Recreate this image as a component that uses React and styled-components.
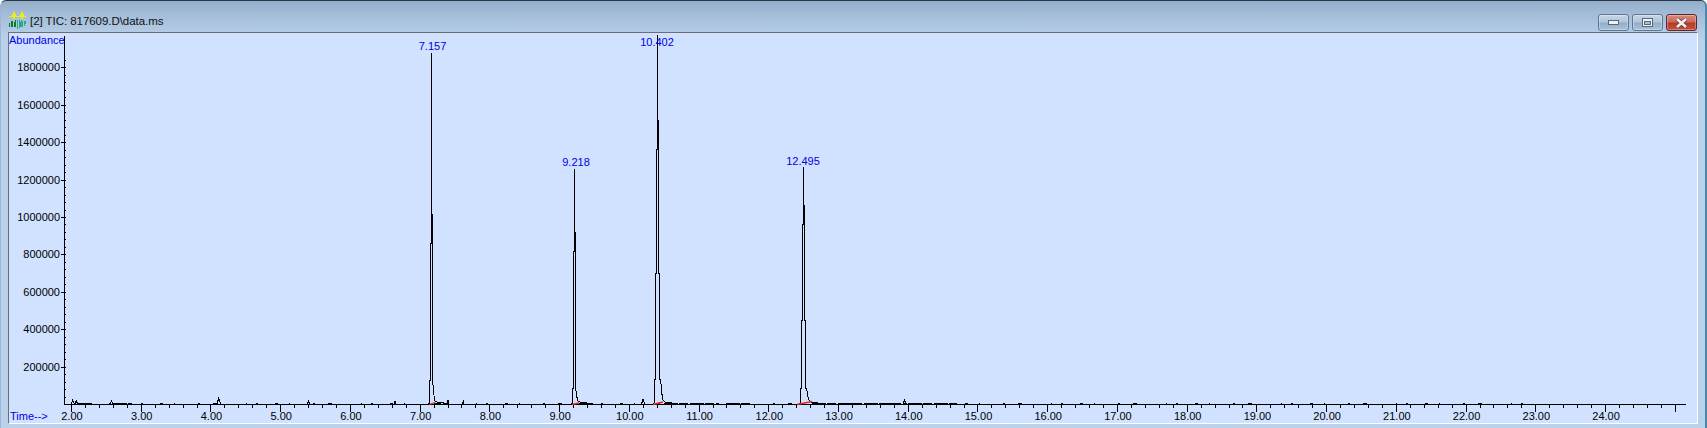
import React from 'react';
import styled, { createGlobalStyle } from 'styled-components';

const Global = createGlobalStyle`
  html, body { margin: 0; padding: 0; background: #ffffff; }
  #root { width: 1707px; height: 428px; overflow: hidden; }
`;

const Window = styled.div`
  width: 1707px;
  height: 428px;
  box-sizing: border-box;
  display: flex;
  flex-direction: column;
  background: linear-gradient(180deg, #93aecb 0, #a2bbd7 12px, #b2cae4 30px, #b9d1ea 40px);
  border-top: 1px solid #2b3640;
  border-left: 1px solid #9db7d3;
  border-right: 2px solid #4d87ab;
  border-radius: 6px 6px 0 0;
  padding: 0 6px 3px 7px;
  font-family: "Liberation Sans", Arial, sans-serif;
`;

const TitleBar = styled.div`
  height: 31px;
  box-sizing: border-box;
  padding-top: 8px;
  display: flex;
  align-items: center;
  flex: none;
`;

const IconSlot = styled.div`
  width: 17px;
  height: 17px;
  margin-left: 1px;
  flex: none;
`;

const TitleText = styled.span`
  font-size: 11.5px;
  color: #111;
  margin-left: 4px;
  flex: 1;
  letter-spacing: -0.05px;
`;

const Controls = styled.div`
  display: flex;
  gap: 3px;
  margin-right: 2px;
  margin-top: 4px;
`;

const CtlButton = styled.div`
  width: 31px;
  height: 17px;
  box-sizing: border-box;
  border: 1px solid ${p => (p.$close ? '#5b2430' : '#5f7690')};
  border-radius: 3px;
  display: flex;
  align-items: center;
  justify-content: center;
  background: ${p => p.$close
    ? 'linear-gradient(180deg, #d98a7c 0, #cb6a5c 45%, #b73a28 55%, #c4513c 100%)'
    : 'linear-gradient(180deg, #c6d7e8 0, #afc5dc 45%, #94aecb 55%, #aac2da 100%)'};
  box-shadow: inset 0 0 0 1px rgba(255,255,255,0.3);
`;

const Plot = styled.div`
  width: 1690px;
  height: 392px;
  flex: none;
  box-sizing: border-box;
  border-top: 1px solid #6e6e6e;
  border-left: 1px solid #6e6e6e;
  border-right: 1px solid #fff;
  border-bottom: 1px solid #fff;
  background: #d0e2ff;
`;

const Chart = styled.svg`
  display: block;
  width: 1688px;
  height: 390px;
  text { font-family: "Liberation Sans", Arial, sans-serif; font-size: 11px; }
`;

const AppIcon = () => (
  <svg width="17" height="17" viewBox="0 0 17 17" shapeRendering="crispEdges">
    <path d="M4.5 0v7M5.5 0v7M3.5 2v3M6.5 2v3M12.5 0v7M13.5 0v7M11.5 2v3M14.5 2v3M0 4.5h17" stroke="#f0ec10" fill="none" />
    <path d="M0.5 11v4M2.5 9v6M3.5 9v6M5.5 10v5M6.5 8v7" stroke="#0b7a30" fill="none" />
    <path d="M8.5 8v9M12.5 8v7M13.5 9v6M15.5 9v5" stroke="#1cc04e" fill="none" />
    <path d="M10.5 8v8M11.5 10v5M16.5 9v3" stroke="#2f8fd8" fill="none" />
  </svg>
);

// chart coordinates are page coordinates minus (9, 33)
const OX = 9, OY = 33;
const px = t => 71 + (t - 2) * 69.73 - OX;
const AXIS_Y = 404 - OY;
const AXIS_X = 64 - OX;
const snap = v => Math.round(v) + 0.5;
const py = v => AXIS_Y - (v / 200000) * 37.4;

const yTicks = [1800000,1600000,1400000,1200000,1000000,800000,600000,400000,200000];
const xLabels = Array.from({ length: 23 }, (_, i) => i + 2);

const minor = [];
for (let t = 2; t <= 25.15; t += 0.2) minor.push(+t.toFixed(2));

const A = snap(AXIS_Y);

const peak = (t, topPage, narrow, thick) => {
  const x = Math.round(px(t));
  const top = topPage - OY;
  const H = AXIS_Y - top;
  const y1 = Math.round(AXIS_Y - 0.067 * H);
  const y2 = Math.round(AXIS_Y - 0.355 * H);
  const y3 = Math.round(AXIS_Y - (thick - 0.08) * H);
  const y4 = Math.round(AXIS_Y - thick * H);
  if (narrow) {
    return [
      `M${x - 2.5} ${A}`,
      `L${x - 1.5} ${A - 2}`,
      `V${y1}H${x - 0.5}V${y3}H${x + 0.5}V${top}`,
      `V${y4}H${x + 1.5}V${y1}`,
      `L${x + 3.5} ${A - 4}`,
      `L${x + 6.5} ${A - 2}`,
      `H${x + 12.5}`,
    ].join('');
  }
  return [
    `M${x - 4.5} ${A}`,
    `L${x - 2.5} ${A - 2}`,
    `V${y1}H${x - 1.5}V${y2}H${x - 0.5}V${y3}H${x + 0.5}V${top}`,
    `V${y4}H${x + 1.5}V${y2}H${x + 2.5}V${y1}H${x + 3.5}`,
    `L${x + 5.5} ${A - 5}`,
    `L${x + 8.5} ${A - 2}`,
    `H${x + 14.5}`,
  ].join('');
};

const bumps = [
  [2.0,2.05,4],[2.05,2.1,3],[2.55,2.61,3],[4.09,4.15,6],[5.39,5.42,4],[6.63,6.66,3],
  [7.39,7.42,4],[7.61,7.64,3],[10.18,10.23,5],[13.93,13.98,4],
];

const dashes = [
  [2.1,2.32],[2.6,2.87],[7.2,7.3],[9.28,9.48],[10.5,11.3],[11.4,11.75],
  [12.62,13.9],[14.0,14.7],
];

const peaks = [
  { t: 7.157, top: 53, label: '7.157', ly: 50, lx: 432.5, r: [429, 435, 2], narrow: true, thick: 0.54 },
  { t: 9.218, top: 169, label: '9.218', ly: 166, lx: 576, r: [572, 579, 1.5], narrow: true, thick: 0.73 },
  { t: 10.402, top: 35, label: '10.402', ly: 46, lx: 657, r: [653, 663, 2.5], thick: 0.77 },
  { t: 12.495, top: 167, label: '12.495', ly: 165, lx: 803, r: [797, 812, 3], thick: 0.84 },
];

export default function App() {
  return (
    <>
      <Global />
      <Window>
        <TitleBar>
          <IconSlot><AppIcon /></IconSlot>
          <TitleText>[2] TIC: 817609.D\data.ms</TitleText>
          <Controls>
            <CtlButton>
              <svg width="11" height="5" viewBox="0 0 11 5" shapeRendering="crispEdges"><rect x="0.5" y="0.5" width="10" height="4" fill="#f2f2f2" stroke="#56677a" /></svg>
            </CtlButton>
            <CtlButton>
              <svg width="11" height="9" viewBox="0 0 11 9" shapeRendering="crispEdges"><rect x="0.5" y="0.5" width="10" height="8" fill="#f2f2f2" stroke="#56677a" /><rect x="2.5" y="3.5" width="6" height="3" fill="#a9c0d8" stroke="#56677a" /></svg>
            </CtlButton>
            <CtlButton $close>
              <svg width="13" height="10" viewBox="0 0 13 10"><path d="M2 1l9 8M11 1l-9 8" stroke="#5b3a3a" strokeWidth="4" /><path d="M2 1l9 8M11 1l-9 8" stroke="#f4f0f0" strokeWidth="2.6" /></svg>
            </CtlButton>
          </Controls>
        </TitleBar>
        <Plot>
          <Chart viewBox="0 0 1688 390">
            <g shapeRendering="crispEdges" stroke="#000" fill="none">
              <path d={`M${AXIS_X + 0.5} 3V${A}H${1686 - OX}`} />
              {yTicks.map(v => <path key={v} d={`M${AXIS_X - 3} ${snap(py(v))}H${AXIS_X}`} />)}
              {Array.from({ length: 46 }, (_, i) => <path key={i} d={`M${AXIS_X} ${snap(py((i + 1) * 40000))}h2`} />)}
              {minor.map(t => <path key={t} d={`M${snap(px(t))} ${A}v3`} />)}
              {xLabels.map(t => <path key={t} d={`M${snap(px(t))} ${A}v7`} />)}
              <path d={`M${snap(px(25))} ${A}v7`} />
              <path d={`M${px(3)} ${A - 1}H${1530 - OX}`} strokeDasharray="2 17 3 11 1 23 2 13 4 29 1 9" />
              {dashes.map(([a, b]) => (
                <path key={a} d={`M${Math.round(px(a))} ${A - 1}H${Math.round(px(b))}`} strokeDasharray="14 1 9 2" />
              ))}
              {peaks.map(p => <path key={p.label} d={peak(p.t, p.top, p.narrow, p.thick)} />)}
              {bumps.map(([a, b, h]) => (
                <path key={a} d={`M${px(a)} ${A}L${(px(a) + px(b)) / 2} ${AXIS_Y - h}L${px(b)} ${A}`} />
              ))}
            </g>
            <g stroke="#e8231a" strokeWidth="1.3" fill="none">
              {peaks.map(p => (
                <path key={p.label} d={`M${p.r[0] - OX} ${A}L${p.r[1] - OX} ${A - p.r[2]}`} />
              ))}
            </g>
            <g fill="#000">
              {yTicks.map(v => (
                <text key={v} x={AXIS_X - 4} y={Math.round(py(v)) + 4} textAnchor="end">{v}</text>
              ))}
              {xLabels.map(t => (
                <text key={t} x={px(t) + 1} y={AXIS_Y + 16} textAnchor="middle">{t.toFixed(2)}</text>
              ))}
            </g>
            <g fill="#0000e6">
              <text x="0" y="11">Abundance</text>
              <text x="1" y={AXIS_Y + 16}>Time--&gt;</text>
              {peaks.map(p => (
                <text key={p.label} x={p.lx - OX} y={p.ly - OY} textAnchor="middle">{p.label}</text>
              ))}
            </g>
          </Chart>
        </Plot>
      </Window>
    </>
  );
}
